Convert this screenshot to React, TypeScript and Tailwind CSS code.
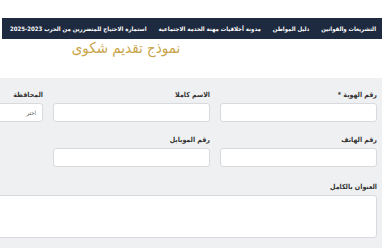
export default function App() {
  const nav = [
    'التشريعات والقوانين',
    'دليل المواطن',
    'مدونة أخلاقيات مهنة الخدمة الاجتماعية',
    'استمارة الاحتياج للمتضررين من الحرب 2023-2025',
  ];

  return (
    <div
      dir="rtl"
      className="relative h-[248px] w-[382px] overflow-hidden bg-white"
      style={{ fontFamily: '"DejaVu Sans Condensed", "DejaVu Sans", sans-serif' }}
    >
      <div className="h-[18px]" />
      <nav className="ml-[2px] flex h-[21px] items-center gap-[12px] bg-[#1d2a40] pr-[6px]">
        {nav.map((item) => (
          <span key={item} className="whitespace-nowrap text-[6px] font-bold text-white">
            {item}
          </span>
        ))}
      </nav>
      <div className="flex h-[39px] w-[512px] justify-center pt-[1px]">
        <h1 className="text-[15px] font-normal leading-[17px] text-[#c9a54b]">نموذج تقديم شكوى</h1>
      </div>
      <section className="h-[170px] bg-[#eff0f2] pr-[5px] pt-[13px]">
        <div className="w-[491px]">
          <div className="grid grid-cols-3 gap-x-[10px]">
            <Field label="رقم الهوية *" />
            <Field label="الاسم كاملا" />
            <Field label="المحافظة" placeholder="اختر" />
          </div>
          <div className="mt-[14px] grid grid-cols-3 gap-x-[10px]">
            <Field label="رقم الهاتف" />
            <Field label="رقم الموبايل" />
            <div />
          </div>
          <div className="mt-[16px]">
            <label className="mb-[3px] block text-[7px] font-bold leading-[9px] text-[#333]">
              العنوان بالكامل
            </label>
            <textarea className="block h-[43px] w-full resize-none rounded-[3px] border border-[#d9dadd] bg-white" />
          </div>
        </div>
      </section>
    </div>
  );
}

function Field({ label, placeholder }: { label: string; placeholder?: string }) {
  return (
    <div>
      <label className="mb-[3px] block text-[7px] font-bold leading-[9px] text-[#333]">{label}</label>
      <div className="flex h-[19px] items-center rounded-[3px] border border-[#d9dadd] bg-white px-[6px] text-[6px] text-[#555]">
        {placeholder}
      </div>
    </div>
  );
}
